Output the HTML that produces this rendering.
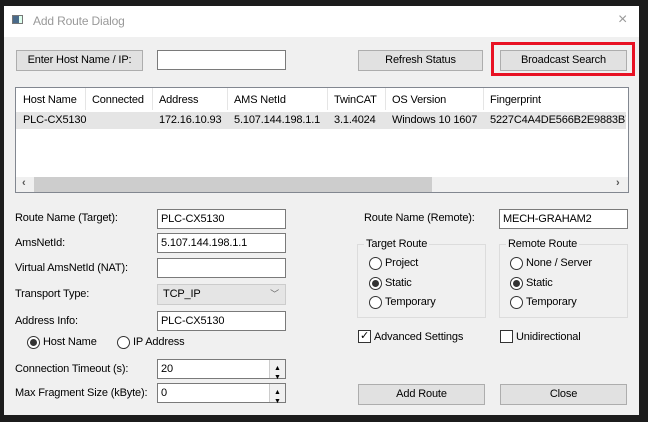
<!DOCTYPE html>
<html><head><style>
*{box-sizing:border-box;margin:0;padding:0}
body{width:648px;height:422px;background:#1c1c1c;position:relative;overflow:hidden;font-family:"Liberation Sans",Arial,sans-serif;font-size:11px;letter-spacing:-0.15px;color:#000}
.a{position:absolute;white-space:nowrap}
.win{position:absolute;left:4px;top:6px;width:635px;height:409px;background:#f0f0f0}
.title{position:absolute;left:4px;top:6px;width:635px;height:31px;background:#fff}
.btn{position:absolute;height:21px;background:#e1e1e1;border:1px solid #adadad;text-align:center;line-height:19px}
.inp{position:absolute;height:20px;background:#fff;border:1px solid #7a7a7a;padding-left:3px;line-height:18px}
.rad{position:absolute;width:13px;height:13px;border:1px solid #333;border-radius:50%;background:#fff}
.rad.on::after{content:"";position:absolute;left:2px;top:2px;width:7px;height:7px;border-radius:50%;background:#333}
.grp{position:absolute;border:1px solid #dcdcdc}
.cb{position:absolute;width:13px;height:13px;border:1px solid #333;background:#fff}
.spin{position:absolute;right:0;top:0;width:16px;height:18px;border-left:1px solid #ccc;background:#f0f0f0}
</style></head><body>
<div class="win"></div>
<div class="title"></div>
<div class="a" style="left:12px;top:15px;width:11px;height:9px;background:#4a6a8a;border:1px solid #777"></div>
<div class="a" style="left:19px;top:16px;width:3px;height:7px;background:#dfe"></div>
<div class="a" style="left:33px;top:14px;font-size:12px;color:#999">Add Route Dialog</div>
<div class="a" style="left:618px;top:11px;font-size:16px;color:#999">×</div>

<div class="btn" style="left:16px;top:50px;width:127px">Enter Host Name / IP:</div>
<div class="inp" style="left:157px;top:50px;width:129px"></div>
<div class="btn" style="left:358px;top:50px;width:125px">Refresh Status</div>
<div class="a" style="left:491px;top:42px;width:144px;height:34px;border:3px solid #e81123"></div>
<div class="btn" style="left:500px;top:50px;width:127px">Broadcast Search</div>

<div class="a" style="left:15px;top:87px;width:614px;height:106px;background:#fff;border:1px solid #828790"></div>
<div class="a" style="left:16px;top:112px;width:610px;height:17px;background:#e5e5e5"></div>
<div class="a" style="left:85px;top:88px;width:1px;height:22px;background:#e5e5e5"></div>
<div class="a" style="left:152px;top:88px;width:1px;height:22px;background:#e5e5e5"></div>
<div class="a" style="left:227px;top:88px;width:1px;height:22px;background:#e5e5e5"></div>
<div class="a" style="left:327px;top:88px;width:1px;height:22px;background:#e5e5e5"></div>
<div class="a" style="left:385px;top:88px;width:1px;height:22px;background:#e5e5e5"></div>
<div class="a" style="left:483px;top:88px;width:1px;height:22px;background:#e5e5e5"></div>
<div class="a" style="left:23px;top:94px">Host Name</div>
<div class="a" style="left:92px;top:94px">Connected</div>
<div class="a" style="left:159px;top:94px">Address</div>
<div class="a" style="left:234px;top:94px">AMS NetId</div>
<div class="a" style="left:334px;top:94px">TwinCAT</div>
<div class="a" style="left:392px;top:94px">OS Version</div>
<div class="a" style="left:490px;top:94px">Fingerprint</div>
<div class="a" style="left:23px;top:114px">PLC-CX5130</div>
<div class="a" style="left:159px;top:114px">172.16.10.93</div>
<div class="a" style="left:234px;top:114px">5.107.144.198.1.1</div>
<div class="a" style="left:334px;top:114px">3.1.4024</div>
<div class="a" style="left:392px;top:114px">Windows 10 1607</div>
<div class="a" style="left:490px;top:114px;width:136px;overflow:hidden">5227C4A4DE566B2E9883B7</div>
<div class="a" style="left:16px;top:177px;width:612px;height:15px;background:#f0f0f0"></div>
<div class="a" style="left:34px;top:177px;width:398px;height:15px;background:#cdcdcd"></div>
<div class="a" style="left:22px;top:177px;font-size:11px;color:#555;font-weight:bold">‹</div>
<div class="a" style="left:616px;top:177px;font-size:11px;color:#555;font-weight:bold">›</div>

<div class="a" style="left:15px;top:212px">Route Name (Target):</div>
<div class="inp" style="left:157px;top:209px;width:129px">PLC-CX5130</div>
<div class="a" style="left:15px;top:237px">AmsNetId:</div>
<div class="inp" style="left:157px;top:233px;width:129px">5.107.144.198.1.1</div>
<div class="a" style="left:15px;top:262px">Virtual AmsNetId (NAT):</div>
<div class="inp" style="left:157px;top:258px;width:129px"></div>
<div class="a" style="left:15px;top:288px">Transport Type:</div>
<div class="a" style="left:157px;top:284px;width:129px;height:21px;background:#e5e5e5;border:1px solid #ccc;padding-left:5px;line-height:19px">TCP_IP<span style="position:absolute;right:6px;color:#666;font-size:9px">﹀</span></div>
<div class="a" style="left:15px;top:315px">Address Info:</div>
<div class="inp" style="left:157px;top:311px;width:129px">PLC-CX5130</div>
<div class="rad on" style="left:27px;top:336px"></div>
<div class="a" style="left:43px;top:336px">Host Name</div>
<div class="rad" style="left:117px;top:336px"></div>
<div class="a" style="left:133px;top:336px">IP Address</div>
<div class="a" style="left:15px;top:363px">Connection Timeout (s):</div>
<div class="inp" style="left:157px;top:359px;width:129px">20<div class="spin"><span style="position:absolute;left:4px;top:0;font-size:7px">▲</span><span style="position:absolute;left:4px;top:9px;font-size:7px">▼</span></div></div>
<div class="a" style="left:15px;top:387px">Max Fragment Size (kByte):</div>
<div class="inp" style="left:157px;top:383px;width:129px">0<div class="spin"><span style="position:absolute;left:4px;top:0;font-size:7px">▲</span><span style="position:absolute;left:4px;top:9px;font-size:7px">▼</span></div></div>

<div class="a" style="left:364px;top:212px">Route Name (Remote):</div>
<div class="inp" style="left:499px;top:209px;width:129px">MECH-GRAHAM2</div>
<div class="grp" style="left:357px;top:244px;width:129px;height:74px"></div>
<div class="a" style="left:364px;top:238px;background:#f0f0f0;padding:0 2px">Target Route</div>
<div class="rad" style="left:369px;top:257px"></div><div class="a" style="left:385px;top:257px">Project</div>
<div class="rad on" style="left:369px;top:277px"></div><div class="a" style="left:385px;top:277px">Static</div>
<div class="rad" style="left:369px;top:296px"></div><div class="a" style="left:385px;top:296px">Temporary</div>
<div class="grp" style="left:499px;top:244px;width:129px;height:74px"></div>
<div class="a" style="left:506px;top:238px;background:#f0f0f0;padding:0 2px">Remote Route</div>
<div class="rad" style="left:510px;top:257px"></div><div class="a" style="left:526px;top:257px">None / Server</div>
<div class="rad on" style="left:510px;top:277px"></div><div class="a" style="left:526px;top:277px">Static</div>
<div class="rad" style="left:510px;top:296px"></div><div class="a" style="left:526px;top:296px">Temporary</div>
<div class="cb" style="left:358px;top:330px"><span style="position:absolute;left:1px;top:-2px;font-size:11px">✓</span></div>
<div class="a" style="left:374px;top:331px">Advanced Settings</div>
<div class="cb" style="left:500px;top:330px"></div>
<div class="a" style="left:516px;top:331px">Unidirectional</div>
<div class="btn" style="left:358px;top:384px;width:127px">Add Route</div>
<div class="btn" style="left:500px;top:384px;width:127px">Close</div>
</body></html>
